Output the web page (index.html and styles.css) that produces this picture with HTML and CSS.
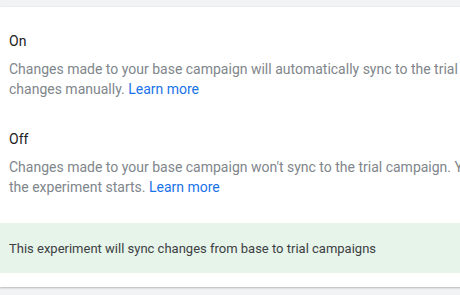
FILE: index.html
```html
<!DOCTYPE html>
<html lang="en">
<head>
    <meta charset="UTF-8">
    <title>Sync settings</title>
    <link rel="stylesheet" href="styles.css">
</head>
<body>
    <div class="card">
        <!-- Sync options -->
        <div class="option">
            <div class="option-title">On</div>
            <div class="option-desc">Changes made to your base campaign will automatically sync to the trial campaign. You can also sync<br>changes manually. <a href="#">Learn more</a></div>
        </div>
        <div class="option">
            <div class="option-title">Off</div>
            <div class="option-desc">Changes made to your base campaign won't sync to the trial campaign. You can sync changes manually after<br>the experiment starts. <a href="#">Learn more</a></div>
        </div>

        <div class="notice">This experiment will sync changes from base to trial campaigns</div>
    </div>
</body>
</html>
```

FILE: styles.css
```css
body {
    margin: 0;
    background-color: #f1f3f4;
    font-family: Roboto, 'Noto Sans', sans-serif;
    overflow: hidden;
    height: 295px;
}

.card {
    margin-top: 7px;
    width: 800px;
    height: 280px;
    background-color: #fff;
    box-shadow: 0 1px 2px rgba(60, 64, 67, 0.3), 0 0 1px rgba(60, 64, 67, 0.15);
    padding-top: 24px;
    box-sizing: border-box;
}

.option {
    padding-left: 9px;
    margin-bottom: 30px;
}

.option-title {
    font-size: 14px;
    line-height: 20px;
    color: #202124;
    margin-bottom: 8px;
}

.option-desc {
    font-size: 14px;
    line-height: 20px;
    color: #80868b;
    white-space: nowrap;
}

.option-desc a {
    color: #1a73e8;
    text-decoration: none;
}

.notice {
    margin-top: -4px;
    height: 50px;
    display: flex;
    align-items: center;
    padding-left: 9px;
    background-color: #e6f4ea;
    color: #3c4043;
    font-size: 13px;
}
```
